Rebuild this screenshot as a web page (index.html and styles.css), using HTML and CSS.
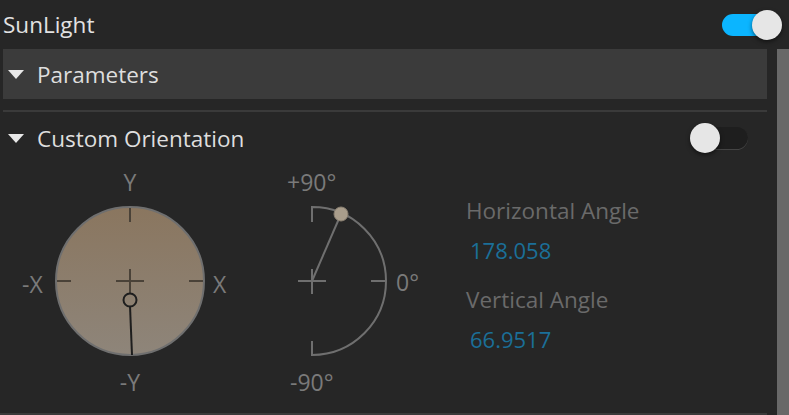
FILE: index.html
```html
<!DOCTYPE html>
<html lang="en">
<head>
    <meta charset="UTF-8">
    <title>SunLight</title>
    <link rel="stylesheet" href="styles.css">
</head>
<body>
    <div class="app">
        <div class="panel">
            <div class="header">
                <span class="title">SunLight</span>
                <span class="toggle on"><span class="knob"></span></span>
            </div>

            <div class="section-bar">
                <span class="caret"></span>
                <span class="section-title">Parameters</span>
            </div>

            <div class="divider"></div>

            <div class="section-row">
                <span class="caret"></span>
                <span class="section-title">Custom Orientation</span>
                <span class="toggle off"><span class="knob"></span></span>
            </div>

            <div class="widgets">
                <svg class="dials" width="440" height="240" viewBox="0 0 440 240">
                    <defs>
                        <linearGradient id="disc" x1="0" y1="0" x2="0" y2="1">
                            <stop offset="0" stop-color="#8a765f"/>
                            <stop offset="1" stop-color="#8e857a"/>
                        </linearGradient>
                    </defs>

                    <!-- horizontal dial -->
                    <circle cx="130" cy="117" r="74" fill="url(#disc)" stroke="#6f6f6f" stroke-width="2"/>
                    <g stroke="#4a4238" stroke-width="2">
                        <line x1="130" y1="44" x2="130" y2="58"/>
                        <line x1="57" y1="117" x2="71" y2="117"/>
                        <line x1="189" y1="117" x2="203" y2="117"/>
                        <line x1="116" y1="117" x2="144" y2="117"/>
                        <line x1="130" y1="105" x2="130" y2="130"/>
                    </g>
                    <line x1="130" y1="142" x2="132" y2="191" stroke="#1e1e1e" stroke-width="2"/>
                    <circle cx="130" cy="136" r="6.5" fill="none" stroke="#1e1e1e" stroke-width="2"/>

                    <g class="axis">
                        <text x="130" y="27" text-anchor="middle">Y</text>
                        <text x="22" y="129">-X</text>
                        <text x="213" y="129">X</text>
                        <text x="130" y="227" text-anchor="middle">-Y</text>
                    </g>

                    <!-- vertical dial -->
                    <g fill="none" stroke="#6f6f6f" stroke-width="2">
                        <path d="M312 58 V43 A74 74 0 0 1 312 191 V177"/>
                        <line x1="371" y1="117" x2="385" y2="117"/>
                        <line x1="298" y1="117" x2="326" y2="117"/>
                        <line x1="312" y1="105" x2="312" y2="130"/>
                        <line x1="312" y1="117" x2="341" y2="50"/>
                    </g>
                    <circle cx="341" cy="50" r="7" fill="#a99d8b" stroke="#8a8072" stroke-width="1"/>

                    <g class="axis">
                        <text x="287" y="27">+90°</text>
                        <text x="396" y="127">0°</text>
                        <text x="290" y="227">-90°</text>
                    </g>
                </svg>

                <div class="readouts">
                    <div class="readout-label">Horizontal Angle</div>
                    <div class="readout-value">178.058</div>
                    <div class="readout-label">Vertical Angle</div>
                    <div class="readout-value">66.9517</div>
                </div>
            </div>

            <div class="bottom-line"></div>
        </div>
        <div class="scrollbar"></div>
    </div>
</body>
</html>
```

FILE: styles.css
```css
body {
    margin: 0;
    background-color: #262626;
    font-family: "Open Sans", "Noto Sans", sans-serif;
    overflow: hidden;
}
.app {
    display: flex;
    width: 789px;
    height: 415px;
}
.panel {
    flex: 1;
    display: flex;
    flex-direction: column;
}
.scrollbar {
    width: 12px;
    margin-top: 49px;
    background-color: #686868;
}
.header {
    height: 49px;
    display: flex;
    align-items: center;
    padding-left: 3px;
}
.title {
    flex: 1;
    color: #e2e2e2;
    font-size: 22.5px;
}
.toggle {
    position: relative;
    border-radius: 12px;
}
.toggle .knob {
    position: absolute;
    top: -4px;
    width: 30px;
    height: 30px;
    border-radius: 50%;
    background-color: #e6e6e6;
    box-shadow: 0 2px 4px rgba(0,0,0,0.5);
}
.toggle.on {
    width: 45px;
    height: 22px;
    background-color: #0bb5ff;
    margin-right: 10px;
}
.toggle.on .knob {
    left: 30px;
}
.toggle.off {
    width: 56px;
    height: 23px;
    background-color: #1e1e1e;
    box-shadow: inset 0 -1px 0 #444;
    margin-right: 29px;
}
.toggle.off .knob {
    left: -2px;
}
.section-bar {
    height: 50px;
    margin: 0 10px 0 3px;
    background-color: #3b3b3b;
    display: flex;
    align-items: center;
}
.caret {
    width: 0;
    height: 0;
    border-left: 8px solid transparent;
    border-right: 8px solid transparent;
    border-top: 9px solid #e8e8e8;
    margin: 0 13px 0 5px;
}
.section-row .caret {
    margin-left: 8px;
}
.section-title {
    flex: 1;
    color: #dedede;
    font-size: 22.5px;
}
.divider {
    height: 2px;
    margin: 11px 10px 0 3px;
    background-color: #3a3a3a;
}
.section-row {
    height: 52px;
    display: flex;
    align-items: center;
}
.widgets {
    flex: 1;
    display: flex;
}
.axis text {
    fill: #7a7a7a;
    font-size: 23px;
    font-family: "Open Sans", "Noto Sans", sans-serif;
}
.readouts {
    padding: 32px 0 0 26px;
}
.readout-label {
    color: #6a6a6a;
    font-size: 22.5px;
    line-height: 30px;
    margin-bottom: 9px;
}
.readout-value {
    color: #1b6f98;
    font-size: 22px;
    line-height: 30px;
    padding-left: 4px;
    margin-bottom: 20px;
}
.bottom-line {
    height: 2px;
    margin-right: 10px;
    background-color: #3a3a3a;
}
```
